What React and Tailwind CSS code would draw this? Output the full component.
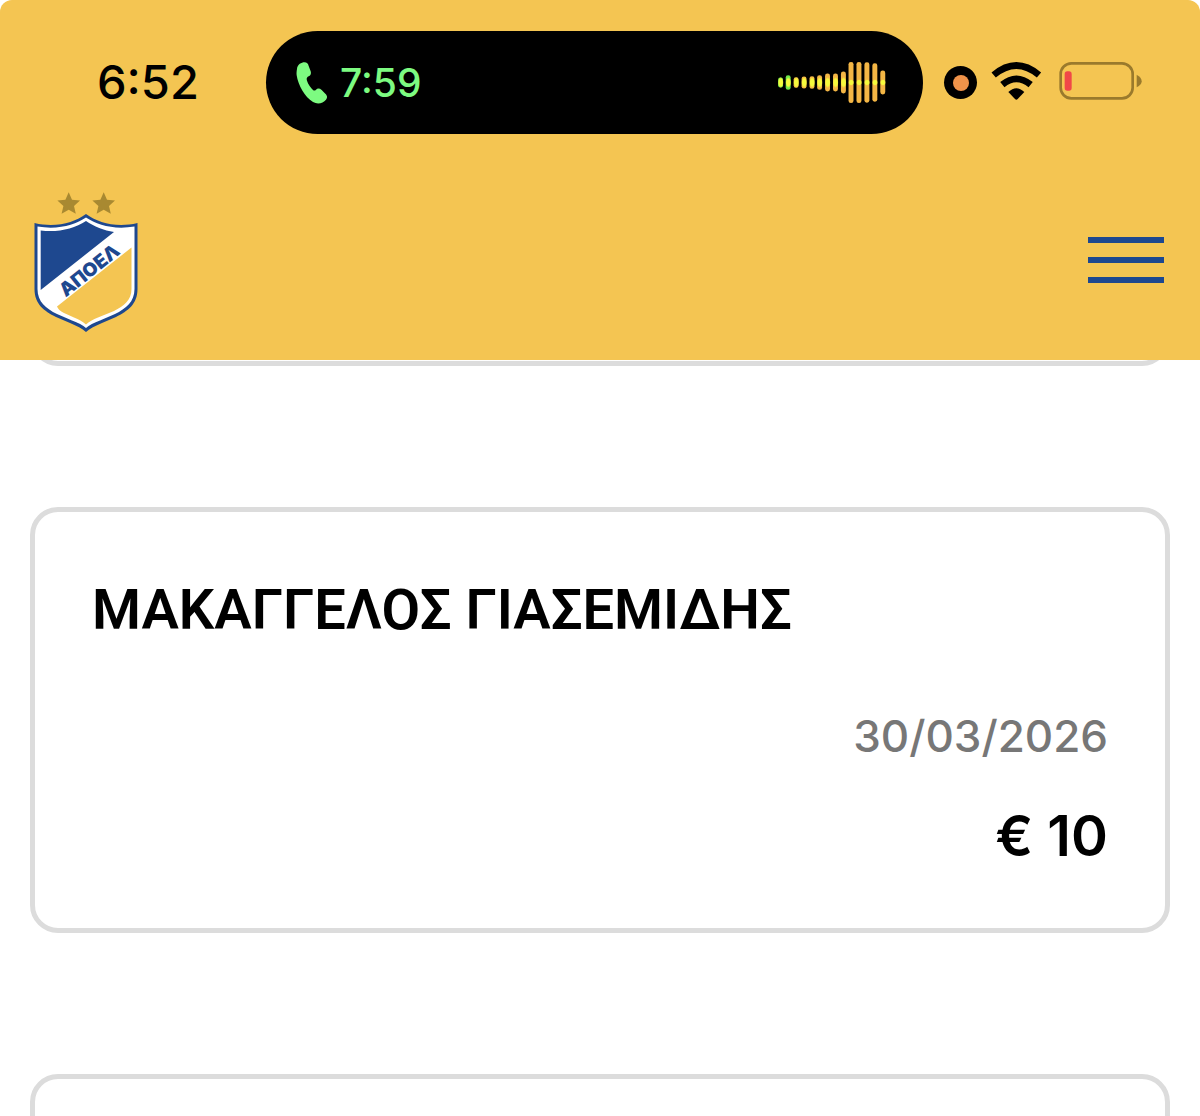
import React from "react";

const WAVE_BARS = [
  { x: 62, half: 15, green: true },
  { x: 85, half: 22, green: true },
  { x: 109, half: 16 },
  { x: 133, half: 18 },
  { x: 157, half: 19 },
  { x: 180, half: 22 },
  { x: 204, half: 27 },
  { x: 228, half: 27 },
  { x: 252, half: 33 },
  { x: 275, half: 62 },
  { x: 299, half: 62 },
  { x: 323, half: 61 },
  { x: 347, half: 58 },
  { x: 371, half: 36 },
];

const DONATIONS = [
  { id: 1 },
  { id: 2, name: "ΜΑΚΑΓΓΕΛΟΣ ΓΙΑΣΕΜΙΔΗΣ", date: "30/03/2026", amount: "€ 10" },
  { id: 3 },
];

const PhoneIcon = () => (
  <svg viewBox="646 130 96 126" className="h-[42px] w-8" fill="#7dfb81" aria-hidden="true">
    <path d="M649 151 C650 137 663 131 671 131 C679 131 682 135 684 142 L690 158 C692 165 690 170 684 173 C678 176 677 180 679 186 C682 197 691 208 697 214 C700 217 703 216 706 213 C711 208 717 209 723 214 L734 225 C740 231 741 237 736 243 C727 254 711 258 697 250 C673 236 652 199 648 170 C647 162 648 156 649 151 Z" />
  </svg>
);

const Waveform = () => (
  <svg viewBox="52 122 330 130" className="h-[43px] w-[110px]" aria-hidden="true">
    <defs>
      <radialGradient id="glow">
        <stop offset="0.6" stopColor="#f6fa3c" />
        <stop offset="1" stopColor="#f6fa3c" stopOpacity="0" />
      </radialGradient>
    </defs>
    {WAVE_BARS.map(({ x, half, green }, i) => (
      <g key={x}>
        <rect x={x - 8} y={187 - half} width="15" height={half * 2} rx="7" fill={green ? "#6fe84a" : "#f4b645"} />
        <ellipse cx={x} cy="187" rx="9" ry={i < 9 ? 17 : 10} fill="url(#glow)" />
      </g>
    ))}
  </svg>
);

const WifiIcon = () => (
  <svg viewBox="690 126 156 120" className="h-10 w-[52px] overflow-visible" aria-hidden="true">
    <path d="M701 162 Q769 105 837 162" fill="none" stroke="#000" strokeWidth="20" />
    <path d="M727 191 Q769 156 812 191" fill="none" stroke="#000" strokeWidth="20" />
    <path d="M745 213 Q769 190 793 213 L773 234 Q769 238 765 234 Z" fill="#000" />
  </svg>
);

const BatteryIcon = () => (
  <svg viewBox="898 127 252 120" className="h-10 w-[84px] overflow-visible" aria-hidden="true">
    <rect x="903" y="128" width="216" height="105" rx="32" fill="none" stroke="#9a7a2c" strokeWidth="8" />
    <rect x="915" y="152" width="21" height="58" rx="8" fill="#f04848" />
    <path d="M1131 162 Q1146 170 1146 182 Q1146 193 1131 200 Z" fill="#9a7a2c" />
  </svg>
);

const Crest = () => (
  <svg viewBox="14 10 104 144" className="h-36 w-[104px]" role="img" aria-label="ΑΠΟΕΛ">
    <g fill="#a88931">
      <path id="star" d="M48.7 12.3 L52 19.7 L60 20.6 L54 26 L55.8 33.8 L48.7 29.8 L41.6 33.8 L43.4 26 L37.4 20.6 L45.4 19.7 Z" />
      <use href="#star" x="35" />
    </g>
    <path
      d="M66 34 C54 43 35 48 14.5 43 V109 C14.5 124 24 131 36 137 L50 143 C57 146 62 148.5 66 152 C70 148.5 75 146 82 143 L96 137 C108 131 117.5 124 117.5 109 V43 C97 48 78 43 66 34 Z"
      fill="#1e488f"
    />
    <path
      d="M66 37.5 C55 45 38 50 17.5 46.5 V109 C17.5 122 26 128.5 37 134 L52 140.5 C58 143 63 145 66 148 C69 145 74 143 80 140.5 L95 134 C106 128.5 114.5 122 114.5 109 V46.5 C94 50 77 45 66 37.5 Z"
      fill="#fff"
    />
    <path d="M66 41 C54 49 38 52.5 20.7 50.5 V110 L94 52 C84 50.5 74 46.5 66 41 Z" fill="#1e488f" />
    <path d="M111.5 67.5 V109 C111.5 120 104 126 94 131 L78 137.5 C73 139.5 69 141.5 66 144.5 C62 141 59 139.5 54 137.5 L44 133 C40 131 38 129 37 126.5 Z" fill="#f4c552" />
    <text
      transform="translate(69 90) rotate(-38.5)"
      textAnchor="middle"
      y="7"
      className="font-[Inter,sans-serif] text-[19px] font-black"
      fill="#1e488f"
    >
      ΑΠΟΕΛ
    </text>
  </svg>
);

const StatusBar = () => (
  <div className="flex h-[103px] items-stretch">
    <div className="flex w-[266px] shrink-0 items-center pb-[2px] pl-[97px] text-[47px] leading-none font-medium">
      6:52
    </div>
    <div className="flex flex-1 items-center justify-between rounded-full bg-black pr-9 pl-[30px]">
      <div className="flex items-center gap-3">
        <PhoneIcon />
        <span className="text-[39px] leading-none font-medium text-[#7dfb81]">7:59</span>
      </div>
      <Waveform />
    </div>
    <div className="flex w-[277px] shrink-0 items-center pl-[21px]">
      <span className="flex size-[33px] items-center justify-center rounded-full bg-black">
        <span className="size-4 rounded-full bg-[#f0934a]" />
      </span>
      <span className="ml-[13px]">
        <WifiIcon />
      </span>
      <span className="ml-[17px]">
        <BatteryIcon />
      </span>
    </div>
  </div>
);

const Header = () => (
  <header className="relative z-10 rounded-t-xl bg-[#f4c552] pt-[31px] pb-[26px]">
    <StatusBar />
    <nav className="mt-14 flex items-center justify-between pr-9 pl-[34px]">
      <a href="#home">
        <Crest />
      </a>
      <button type="button" aria-label="Menu" className="flex w-[76px] flex-col gap-[14px] pb-1">
        <span className="h-[6px] w-full bg-[#1e488f]" />
        <span className="h-[6px] w-full bg-[#1e488f]" />
        <span className="h-[6px] w-full bg-[#1e488f]" />
      </button>
    </nav>
  </header>
);

const DonationCard = ({ name, date, amount }) => (
  <li className="min-h-[426px] shrink-0 rounded-[28px] border-5 border-[#dcdcdc] px-[57px] pt-[62px] pb-14">
    {name && (
      <>
        <h2 className="font-[Roboto,sans-serif] text-[56px] leading-[72px] font-semibold">{name}</h2>
        <p className="mt-[62px] text-right text-[44px] leading-[56px] font-medium text-[#777777]">{date}</p>
        <p className="mt-9 text-right text-[56px] leading-[72px] font-semibold">{amount}</p>
      </>
    )}
  </li>
);

export default function App() {
  return (
    <div className="h-screen overflow-hidden bg-white font-[Inter,sans-serif] text-black">
      <Header />
      {/* List is scrolled so the first card sits behind the header */}
      <ul className="-mt-[420px] flex flex-col gap-[141px] px-[30px]">
        {DONATIONS.map((donation) => (
          <DonationCard key={donation.id} {...donation} />
        ))}
      </ul>
    </div>
  );
}
